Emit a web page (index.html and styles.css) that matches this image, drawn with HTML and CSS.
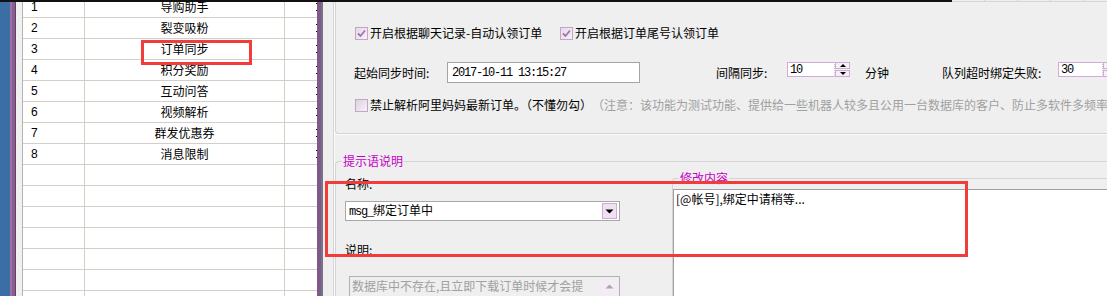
FILE: index.html
```html
<!DOCTYPE html>
<html lang="zh-CN">
<head>
  <meta charset="UTF-8" />
  <title>订单同步 设置</title>
  <link rel="stylesheet" href="styles.css">
</head>
<body>
  <div class="screen">
    <div class="topbar">
      <div class="topbar-dark"></div>
      <div class="topbar-grid"></div>
    </div>

    <div class="main">
      <div class="desk"></div>
      <div class="frame"></div>
      <div class="gutter"></div>

      <div class="list">
        <div class="list-rows">
          <div class="row"><span class="c-no">1</span><span class="c-name">导购助手</span><span class="c-more"><i></i></span></div>
          <div class="row"><span class="c-no">2</span><span class="c-name">裂变吸粉</span><span class="c-more"><i></i></span></div>
          <div class="row"><span class="c-no">3</span><span class="c-name">订单同步</span><span class="c-more"><i></i></span></div>
          <div class="row"><span class="c-no">4</span><span class="c-name">积分奖励</span><span class="c-more"><i></i></span></div>
          <div class="row"><span class="c-no">5</span><span class="c-name">互动问答</span><span class="c-more"><i></i></span></div>
          <div class="row"><span class="c-no">6</span><span class="c-name">视频解析</span><span class="c-more"><i></i></span></div>
          <div class="row"><span class="c-no">7</span><span class="c-name">群发优惠券</span><span class="c-more"><i></i></span></div>
          <div class="row"><span class="c-no">8</span><span class="c-name">消息限制</span><span class="c-more"><i></i></span></div>
          <div class="row"><span class="c-no"></span><span class="c-name"></span><span class="c-more"></span></div>
          <div class="row"><span class="c-no"></span><span class="c-name"></span><span class="c-more"></span></div>
          <div class="row"><span class="c-no"></span><span class="c-name"></span><span class="c-more"></span></div>
          <div class="row"><span class="c-no"></span><span class="c-name"></span><span class="c-more"></span></div>
          <div class="row"><span class="c-no"></span><span class="c-name"></span><span class="c-more"></span></div>
          <div class="row"><span class="c-no"></span><span class="c-name"></span><span class="c-more"></span></div>
          <div class="row"><span class="c-no"></span><span class="c-name"></span><span class="c-more"></span></div>
        </div>
      </div>

      <div class="frame-r"></div>

      <div class="panel">
        <div class="group-top">
          <div class="opt-row row-a">
            <label class="chk chk-first">
              <span class="box"><svg width="11" height="11" viewBox="0 0 11 11"><path d="M2 5.5 L4.5 8 L9 2.5" fill="none" stroke="#9b77a6" stroke-width="1.8"/></svg></span>
              开启根据聊天记录-自动认领订单
            </label>
            <label class="chk">
              <span class="box"><svg width="11" height="11" viewBox="0 0 11 11"><path d="M2 5.5 L4.5 8 L9 2.5" fill="none" stroke="#9b77a6" stroke-width="1.8"/></svg></span>
              开启根据订单尾号认领订单
            </label>
          </div>

          <div class="opt-row row-b">
            <span class="lbl lbl-start">起始同步时间:</span>
            <span class="edit edit-time mono">2017-10-11 13:15:27</span>
            <span class="lbl lbl-gap">间隔同步:</span>
            <span class="spin">
              <span class="spin-edit mono">10</span>
              <span class="spin-btns">
                <span class="spin-btn"><svg width="8" height="5" viewBox="0 0 8 5"><path d="M1 4 L4 1 L7 4 Z" fill="#000"/></svg></span>
                <span class="spin-btn"><svg width="8" height="5" viewBox="0 0 8 5"><path d="M1 1 L4 4 L7 1 Z" fill="#000"/></svg></span>
              </span>
            </span>
            <span class="lbl lbl-unit">分钟</span>
            <span class="lbl lbl-queue">队列超时绑定失败:</span>
            <span class="spin">
              <span class="spin-edit spin-edit-s mono">30</span>
              <span class="spin-btns">
                <span class="spin-btn"><svg width="8" height="5" viewBox="0 0 8 5"><path d="M1 4 L4 1 L7 4 Z" fill="#000"/></svg></span>
                <span class="spin-btn"><svg width="8" height="5" viewBox="0 0 8 5"><path d="M1 1 L4 4 L7 1 Z" fill="#000"/></svg></span>
              </span>
            </span>
          </div>

          <div class="opt-row row-c">
            <label class="chk">
              <span class="box box-off"></span>
              禁止解析阿里妈妈最新订单。（不懂勿勾）
            </label>
            <span class="note">（注意：该功能为测试功能、提供给一些机器人较多且公用一台数据库的客户、防止多软件多频率同时解析造成的重复</span>
          </div>
        </div>

        <fieldset class="tip-group">
          <legend>提示语说明</legend>
          <div class="tip-body">
            <div class="tip-left">
              <div class="field-label label-name">名称:</div>
              <div class="combo">
                <span class="combo-text"><span class="mono">msg_</span>绑定订单中</span>
                <span class="combo-btn"><svg width="9" height="5" viewBox="0 0 9 5"><path d="M0.5 0.5 L4.5 4.5 L8.5 0.5 Z" fill="#000"/></svg></span>
              </div>
              <div class="field-label label-desc">说明:</div>
              <div class="memo">
                <div class="memo-text">数据库中不存在,且立即下载订单时候才会提<br>示该消息</div>
                <div class="memo-scroll"><svg width="9" height="5" viewBox="0 0 9 5"><path d="M0.5 4.5 L4.5 0.5 L8.5 4.5 Z" fill="#a8a8a8"/></svg></div>
              </div>
            </div>

            <fieldset class="edit-group">
              <legend>修改内容</legend>
              <div class="edit-box">[@帐号],绑定中请稍等...</div>
            </fieldset>
          </div>
        </fieldset>
      </div>
    </div>

    <div class="mark mark-row"></div>
    <div class="mark mark-tip"></div>
  </div>
</body>
</html>
```

FILE: styles.css
```css
* {
  box-sizing: border-box;
}
body {
  margin: 0;
  width: 1107px;
  height: 296px;
  overflow: hidden;
  background: #efefef;
  font-family: "Noto Sans CJK SC", "Liberation Sans", sans-serif;
  font-size: 12px;
  line-height: 12px;
  color: #000;
}
.mono {
  font-family: "Liberation Mono", "Noto Sans CJK SC", monospace;
  letter-spacing: -1.2px;
}

.screen {
  position: relative;
  width: 1107px;
  height: 296px;
  overflow: hidden;
  display: flex;
  flex-direction: column;
}

/* strip at the very top */
.topbar {
  display: flex;
  height: 2px;
  flex: none;
}
.topbar-dark {
  width: 952px;
  background: #111;
}
.topbar-grid {
  flex: 1;
  border-bottom: 1px solid #d6d6d6;
  background: repeating-linear-gradient(90deg, transparent 0 32px, #d6d6d6 32px 33px);
}

.main {
  flex: 1;
  display: flex;
  min-height: 0;
}
.desk {
  flex: none;
  width: 10px;
  background: #3a6ea5;
}
.frame {
  flex: none;
  width: 6px;
  background: #8a5d8f;
  border-left: 2px solid #9d70a2;
  border-right: 1px solid #63406a;
}
.gutter {
  flex: none;
  width: 7px;
  background: #f0f0f0;
  border-right: 1px solid #b4b4b4;
}

/* list on the left */
.list {
  flex: none;
  width: 294px;
  background: #fff;
  overflow: hidden;
}
.list-rows {
  margin-top: -5px;
}
.row {
  display: flex;
  height: 21px;
  border-bottom: 1px solid #d4d0c8;
}
.row span {
  display: flex;
  align-items: center;
}
.c-no {
  width: 62px;
  padding-left: 8px;
  border-right: 1px solid #d4d0c8;
  font-family: "Liberation Sans", sans-serif;
}
.c-name {
  width: 200px;
  justify-content: center;
  border-right: 1px solid #d4d0c8;
}
.c-more {
  flex: 1;
  justify-content: flex-end;
}
.c-more i {
  width: 1px;
  height: 8px;
  border-top: 1px solid #000;
  border-bottom: 1px solid #000;
}

.frame-r {
  flex: none;
  width: 6px;
  background: #80588a;
  border-right: 2px solid #747488;
}

/* right side */
.panel {
  flex: 1;
  min-width: 0;
  padding-left: 12px;
  overflow: hidden;
  background: linear-gradient(90deg, #efefef 10px, #d4d4d4 10px 11px, #fbfbfb 11px 12px, #efefef 12px);
}
.group-top {
  height: 132px;
  width: 800px;
  padding: 21px 0 0 19px;
  border-left: 1px solid #d4d4d4;
  border-bottom: 1px solid #d4d4d4;
  border-bottom-left-radius: 4px;
  box-shadow: 0 1px 0 #fbfbfb;
}
.opt-row {
  display: flex;
  align-items: center;
  white-space: nowrap;
}
.row-a {
  height: 20px;
}
.row-b {
  height: 21px;
  margin-top: 19px;
}
.row-c {
  height: 20px;
  margin-top: 12px;
}

.chk {
  display: flex;
  align-items: center;
  gap: 2px;
}
.chk-first {
  width: 205px;
}
.box {
  width: 13px;
  height: 13px;
  border: 1px solid #c6a2cc;
  background: linear-gradient(135deg, #e6dae8, #f7f1f8);
  display: flex;
  align-items: center;
  justify-content: center;
}
.box-off {
  background: linear-gradient(135deg, #ddd2df, #f6f1f7);
}
.note {
  color: #a0a0a0;
}

.lbl {
  flex: none;
}
.lbl-start {
  width: 93px;
  margin-left: -1px;
}
.edit {
  display: flex;
  align-items: center;
  background: #fff;
  border: 1px solid #a4a4a4;
}
.edit-time {
  width: 193px;
  height: 21px;
  padding-left: 4px;
}
.lbl-gap {
  width: 71px;
  margin-left: 76px;
}
.lbl-unit {
  width: 24px;
  margin-left: 15px;
}
.lbl-queue {
  width: 116px;
  margin-left: 53px;
}
.spin {
  display: flex;
  align-self: flex-start;
  height: 15px;
}
.spin-edit {
  width: 48px;
  height: 15px;
  padding-left: 2px;
  display: flex;
  align-items: center;
  background: #fff;
  border: 1px solid #d3a9da;
  border-right: 1px dotted #c8c8c8;
}
.spin-edit-s {
  width: 45px;
}
.spin-btns {
  display: flex;
  flex-direction: column;
  justify-content: space-between;
  width: 15px;
}
.spin-btn {
  height: 7px;
  display: flex;
  align-items: center;
  justify-content: center;
  border: 1px solid #d3a9da;
  background: #f5eff7;
}

/* lower group boxes */
fieldset {
  margin: 0;
  padding: 0;
  min-width: 0;
  border: 1px solid #d4d4d4;
  border-right: none;
  border-bottom: none;
  border-top-left-radius: 4px;
}
legend {
  padding: 0 1px;
  margin-left: 6px;
  color: #c400c8;
  line-height: 12px;
}
.tip-group {
  margin-top: 21px;
  height: 200px;
  width: 800px;
}
.tip-body {
  display: flex;
  align-items: flex-start;
}
.tip-left {
  flex: none;
  width: 275px;
  margin-left: 9px;
}
.field-label {
  height: 12px;
}
.label-name {
  margin-top: 11px;
}
.combo {
  margin-top: 11px;
  height: 20px;
  display: flex;
  align-items: center;
  justify-content: space-between;
  background: #fff;
  border: 1px solid #a8a8a8;
  padding: 0 2px 0 3px;
}
.combo-btn {
  width: 15px;
  height: 16px;
  display: flex;
  align-items: center;
  justify-content: center;
  border: 1px solid #d3a9da;
  background: #efe2f0;
}
.label-desc {
  margin-top: 23px;
}
.memo {
  margin: 20px 0 0 4px;
  width: 271px;
  height: 60px;
  display: flex;
  border: 1px solid #b2b2b2;
  background: #efefef;
}
.memo-text {
  flex: 1;
  padding: 1px 0 0 2px;
  line-height: 16px;
  color: #a0a0a0;
}
.memo-scroll {
  width: 20px;
  display: flex;
  justify-content: center;
  padding-top: 7px;
  background: #f3ecf4;
}

.edit-group {
  flex: 1;
  margin: 5px 0 0 52px;
  height: 140px;
}
.edit-box {
  margin-top: 5px;
  height: 130px;
  background: #fff;
  border-top: 1px solid #a0a0a0;
  border-left: 1px solid #a0a0a0;
  padding: 2px 0 0 2px;
  line-height: 14px;
}

/* red annotation boxes drawn over the screenshot */
.mark {
  position: absolute;
  border: 3px solid #f23c3c;
}
.mark-row {
  left: 141px;
  top: 40px;
  width: 111px;
  height: 25px;
}
.mark-tip {
  left: 325px;
  top: 181px;
  width: 643px;
  height: 76px;
}
```
